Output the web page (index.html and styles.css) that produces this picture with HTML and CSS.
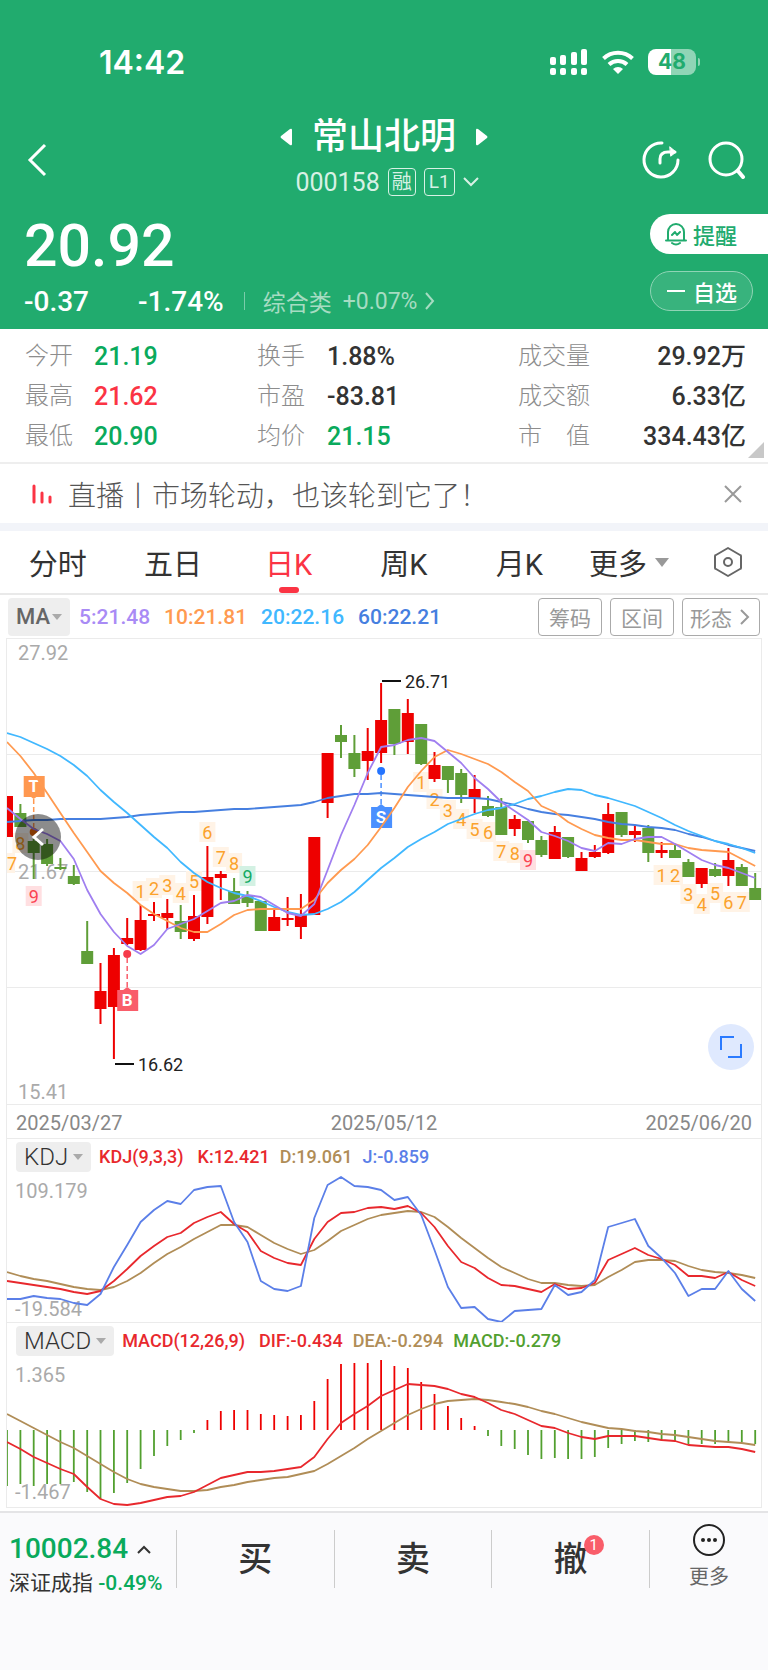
FILE: index.html
```html
<!DOCTYPE html>
<html lang="zh-CN">
<head>
<meta charset="UTF-8">
<meta name="viewport" content="width=device-width, initial-scale=1.0">
<title>常山北明 000158</title>
<link rel="stylesheet" href="styles.css">
</head>
<body>

<header class="header">
  <div class="status-bar">
    <span class="time">14:42</span>
    <div class="status-icons">
      <svg width="38" height="28" viewBox="0 0 38 28" fill="#fff">
        <rect x="0" y="9" width="6" height="8" rx="2"/>
        <rect x="10" y="7" width="6" height="10" rx="2"/>
        <rect x="21" y="4" width="6" height="13" rx="2"/>
        <rect x="31" y="1" width="6" height="16" rx="2"/>
        <rect x="0" y="20" width="6" height="7" rx="2"/>
        <rect x="10" y="20" width="6" height="7" rx="2"/>
        <rect x="21" y="20" width="6" height="7" rx="2"/>
        <rect x="31" y="20" width="6" height="7" rx="2"/>
      </svg>
      <svg width="34" height="26" viewBox="0 0 34 26" fill="none" stroke="#fff" stroke-width="4">
        <path d="M2.500 9.500a21 21 0 0 1 29 0"/>
        <path d="M8 15.500a13 13 0 0 1 18 0"/>
        <path d="M17 25l-5-5a7.500 7.500 0 0 1 10 0z" fill="#fff" stroke="none"/>
      </svg>
      <span class="battery">48</span>
    </div>
  </div>

  <div class="title-bar">
    <button class="icon-btn back" aria-label="返回">
      <svg width="20" height="34" viewBox="0 0 20 34" fill="none" stroke="#fff" stroke-width="3"><path d="M18 2L3 17l15 15"/></svg>
    </button>
    <div class="title">
      <div class="title-name">
        <button class="icon-btn" aria-label="上一只"><svg width="12" height="18" viewBox="0 0 12 18" fill="#fff"><path d="M12 2v14q0 2-2 1L1 10q-1-1 0-2l9-7q2-1 2 1z"/></svg></button>
        <h1>常山北明</h1>
        <button class="icon-btn" aria-label="下一只"><svg width="12" height="18" viewBox="0 0 12 18" fill="#fff"><path d="M0 2v14q0 2 2 1l9-7q1-1 0-2L2 1Q0 0 0 2z"/></svg></button>
      </div>
      <div class="title-code">
        <span class="code">000158</span>
        <span class="tag tag-cn">融</span>
        <span class="tag">L1</span>
        <svg width="16" height="10" viewBox="0 0 16 10" fill="none" stroke="#d8f1e5" stroke-width="2"><path d="M1 1l7 7 7-7"/></svg>
      </div>
    </div>
    <div class="title-actions">
      <button class="icon-btn" aria-label="分享">
        <svg width="38" height="38" viewBox="0 0 38 38" fill="none" stroke="#fff" stroke-width="3" stroke-linecap="round">
          <path d="M20 2a17 17 0 1 0 16 17"/>
          <path d="M18 22v-4q0-7 8-7h7"/>
          <path d="M28 6l6 5-5 4z" fill="#fff" stroke-width="1"/>
        </svg>
      </button>
      <button class="icon-btn" aria-label="搜索">
        <svg width="38" height="38" viewBox="0 0 38 38" fill="none" stroke="#fff" stroke-width="3" stroke-linecap="round"><circle cx="18" cy="18" r="16"/><path d="M30 30l5 6" stroke-width="4"/></svg>
      </button>
    </div>
  </div>

  <div class="quote">
    <div class="quote-main">
      <div class="price">20.92</div>
      <div class="change">
        <span class="change-value">-0.37</span>
        <span class="change-rate">-1.74%</span>
        <a class="sector" href="#"><span>综合类</span><span>+0.07%</span>
          <svg width="10" height="18" viewBox="0 0 10 18" fill="none" stroke="#a6dcc2" stroke-width="2"><path d="M1 1l7 8-7 8"/></svg>
        </a>
      </div>
    </div>
    <div class="quote-actions">
      <button class="pill pill-alert">
        <svg width="22" height="24" viewBox="0 0 22 24" fill="none" stroke="#21ab6e" stroke-width="2" stroke-linecap="round" stroke-linejoin="round"><path d="M3 18V10a8 8 0 0 1 16 0v8M1 18.500h20M7 21q4 3 8 0M7 13l3-3 2 3 3-3"/></svg>
        提醒
      </button>
      <button class="pill pill-watch">
        <svg width="18" height="4" viewBox="0 0 18 4" stroke="#fff" stroke-width="2"><path d="M0 2h18"/></svg>
        自选
      </button>
    </div>
  </div>
</header>

<section class="stats">
  <dl class="stats-col col-a">
    <dt>今开</dt><dd class="green">21.19</dd>
    <dt>最高</dt><dd class="red">21.62</dd>
    <dt>最低</dt><dd class="green">20.90</dd>
  </dl>
  <dl class="stats-col col-b">
    <dt>换手</dt><dd>1.88%</dd>
    <dt>市盈</dt><dd>-83.81</dd>
    <dt>均价</dt><dd class="green">21.15</dd>
  </dl>
  <dl class="stats-col col-c">
    <dt>成交量</dt><dd>29.92万</dd>
    <dt>成交额</dt><dd>6.33亿</dd>
    <dt>市　值</dt><dd>334.43亿</dd>
  </dl>
</section>

<section class="news">
  <svg class="news-icon" width="20" height="20" viewBox="0 0 20 20" stroke="#fb3444" stroke-width="3" stroke-linecap="round"><path d="M2 2v16M10 9v9M18 13v5"/></svg>
  <a href="#">直播丨市场轮动，也该轮到它了！</a>
  <button class="icon-btn" aria-label="关闭">
    <svg width="18" height="18" viewBox="0 0 18 18" stroke="#999" stroke-width="2"><path d="M1 1l16 16M17 1L1 17"/></svg>
  </button>
</section>

<nav class="tabs">
  <button>分时</button>
  <button>五日</button>
  <button class="active">日K</button>
  <button>周K</button>
  <button>月K</button>
  <button class="tab-more">更多<i class="caret"></i></button>
  <button class="tab-set" aria-label="设置">
    <svg width="28" height="32" viewBox="0 0 28 32" fill="none" stroke="#666" stroke-width="2" stroke-linejoin="round"><path d="M14 2l12 7q1 0 1 1v12q0 1-1 1l-12 7-12-7q-1 0-1-1V10q0-1 1-1z"/><circle cx="14" cy="16" r="4"/></svg>
  </button>
</nav>

<main>
  <div class="ma-bar">
    <button class="indicator indicator-ma">MA<i class="caret caret-sm"></i></button>
    <span class="ma5">5:21.48</span>
    <span class="ma10">10:21.81</span>
    <span class="ma20">20:22.16</span>
    <span class="ma60">60:22.21</span>
    <div class="ma-tools">
      <button>筹码</button>
      <button>区间</button>
      <button>形态<svg width="10" height="16" viewBox="0 0 10 16" fill="none" stroke="#999" stroke-width="2"><path d="M1 1l7 7-7 7"/></svg></button>
    </div>
  </div>

  <section class="chart">
    <svg id="kline" viewBox="0 0 754 465"></svg>
    <button class="chart-prev" aria-label="向左">
      <svg width="14" height="20" viewBox="0 0 14 20" fill="none" stroke="#fff" stroke-width="3"><path d="M12 2L3 10l9 8"/></svg>
    </button>
    <button class="chart-full" aria-label="全屏">
      <svg width="22" height="22" viewBox="0 0 22 22" fill="none" stroke="#2b7bff" stroke-width="2"><path d="M1 14V1h13M21 8v13H8"/></svg>
    </button>
  </section>

  <div class="dates"><span>2025/03/27</span><span>2025/05/12</span><span>2025/06/20</span></div>

  <section class="sub-chart">
    <div class="legend">
      <button class="indicator">KDJ<i class="caret caret-sm"></i></button>
      <span class="k legend-name">KDJ(9,3,3)</span>
      <span class="k">K:12.421</span>
      <span class="d">D:19.061</span>
      <span class="j">J:-0.859</span>
    </div>
    <svg id="kdj" viewBox="0 0 754 148"></svg>
  </section>

  <section class="sub-chart last">
    <div class="legend">
      <button class="indicator">MACD<i class="caret caret-sm"></i></button>
      <span class="k legend-name">MACD(12,26,9)</span>
      <span class="k">DIF:-0.434</span>
      <span class="d">DEA:-0.294</span>
      <span class="m">MACD:-0.279</span>
    </div>
    <svg id="macd" viewBox="0 0 754 149"></svg>
  </section>
</main>

<footer class="footer">
  <a class="index" href="#">
    <span class="index-value">10002.84
      <svg width="14" height="9" viewBox="0 0 14 9" fill="none" stroke="#333" stroke-width="2"><path d="M1 8l6-6 6 6"/></svg>
    </span>
    <span class="index-name">深证成指 <b>-0.49%</b></span>
  </a>
  <button class="trade">买</button>
  <button class="trade">卖</button>
  <button class="trade"><span class="trade-label">撤<span class="badge">1</span></span></button>
  <button class="more">
    <svg width="34" height="34" viewBox="0 0 34 34" fill="none" stroke="#222" stroke-width="2"><circle cx="17" cy="17" r="15"/><g fill="#222" stroke="none"><circle cx="11" cy="17" r="2"/><circle cx="17" cy="17" r="2"/><circle cx="23" cy="17" r="2"/></g></svg>
    更多
  </button>
</footer>

<script src="chart.js"></script>
</body>
</html>
```

FILE: styles.css
```css
* {
  box-sizing: border-box;
}

body {
  margin: 0;
  min-height: 100vh;
  display: flex;
  flex-direction: column;
  background: #fff;
  color: #333;
  font-family: Roboto, "Noto Sans CJK SC", sans-serif;
}

button {
  padding: 0;
  border: none;
  background: none;
  color: inherit;
  font: inherit;
  cursor: pointer;
}

a {
  color: inherit;
  text-decoration: none;
}

svg {
  display: block;
  flex: none;
}

.icon-btn {
  display: flex;
}

.green { color: #0aaa5c; }
.red { color: #fb3444; }

/* header */
.header {
  height: 329px;
  background: #21ab6e;
  color: #fff;
}

.status-bar {
  display: flex;
  justify-content: space-between;
  align-items: center;
  height: 115px;
  padding: 9px 72px 0 99px;
}

.time {
  font: 600 32px Inter, sans-serif;
}

.status-icons {
  display: flex;
  align-items: center;
  gap: 13px;
}

.battery {
  position: relative;
  width: 48px;
  height: 26px;
  border-radius: 8px;
  background: linear-gradient(90deg, #fff 48%, #90d5b6 48%);
  color: #21ab6e;
  font: 700 21px/26px Inter, sans-serif;
  text-align: center;
}

.battery::after {
  content: "";
  position: absolute;
  left: 50px;
  top: 9px;
  width: 2px;
  height: 8px;
  border-radius: 0 2px 2px 0;
  background: #90d5b6;
}

.title-bar {
  display: grid;
  grid-template-columns: 1fr auto 1fr;
  align-items: center;
  height: 90px;
  padding: 0 22px;
}

.back {
  margin-left: 5px;
}

.title {
  display: flex;
  flex-direction: column;
  align-items: center;
}

.title-name {
  display: flex;
  align-items: center;
  gap: 20px;
}

h1 {
  margin: 0;
  font-size: 36px;
  font-weight: 500;
  line-height: 44px;
}

.title-code {
  display: flex;
  align-items: center;
  gap: 8px;
  height: 46px;
  padding-left: 6px;
  color: #d8f1e5;
}

.code {
  font-size: 25px;
}

.tag {
  height: 28px;
  padding: 0 4px;
  border: 1px solid #d8f1e5;
  border-radius: 4px;
  font-size: 19px;
  line-height: 26px;
}

.tag-cn {
  padding: 0 3px;
  font-size: 20px;
}

.title-actions {
  display: flex;
  justify-content: flex-end;
  gap: 28px;
}

.quote {
  display: flex;
  justify-content: space-between;
  padding-left: 24px;
}

.price {
  padding-top: 9px;
  font-size: 59px;
  font-weight: 500;
  line-height: 64px;
}

.change {
  display: flex;
  align-items: center;
  height: 46px;
  font-size: 28px;
  font-weight: 500;
}

.change-rate {
  margin-left: 49px;
}

.sector {
  display: flex;
  align-items: center;
  gap: 11px;
  height: 18px;
  margin-left: 20px;
  padding-left: 18px;
  border-left: 1px solid #7accaa;
  color: #a6dcc2;
  font-size: 23px;
  font-weight: 400;
}

.sector svg {
  margin-left: -3px;
}

.quote-actions {
  display: flex;
  flex-direction: column;
  align-items: flex-end;
  gap: 17px;
  padding-top: 9px;
}

.pill {
  display: flex;
  align-items: center;
  gap: 6px;
  height: 40px;
  font-size: 22px;
  font-weight: 500;
}

.pill-alert {
  width: 118px;
  padding-left: 15px;
  border-radius: 20px 0 0 20px;
  background: #fff;
  color: #21ab6e;
}

.pill-watch {
  width: 103px;
  margin-right: 15px;
  padding-left: 16px;
  gap: 8px;
  border: 1px solid #8fd4b5;
  border-radius: 20px;
  background: #38b37d;
}

/* stats */
.stats {
  position: relative;
  display: grid;
  grid-template-columns: 232px 261px 1fr;
  height: 133px;
  padding: 7px 22px 0 25px;
}

.stats::after {
  content: "";
  position: absolute;
  right: 4px;
  bottom: 4px;
  border: 8px solid #c8c8c8;
  border-top-color: transparent;
  border-left-color: transparent;
}

.stats-col {
  display: grid;
  grid-template-rows: repeat(3, 40px);
  align-items: center;
  margin: 0;
  font-size: 24px;
  line-height: 40px;
}

.stats dt {
  color: #8d8d8d;
  font-weight: 300;
}

.stats dd {
  margin: 0;
  padding-top: 2px;
  font-size: 25px;
  font-weight: 500;
}

.col-a { grid-template-columns: 69px 1fr; }
.col-b { grid-template-columns: 70px 1fr; }
.col-c { grid-template-columns: 80px 1fr; }
.col-c dd { text-align: right; }

/* news */
.news {
  display: flex;
  align-items: center;
  height: 61px;
  padding: 0 26px 0 32px;
  border-top: 2px solid #eee;
  color: #555;
  font-size: 28px;
  font-weight: 300;
}

.news a {
  flex: 1;
  margin-left: 16px;
}

/* tabs */
.tabs {
  display: flex;
  height: 72px;
  padding-right: 26px;
  border-top: 8px solid #f2f4f9;
  border-bottom: 2px solid #e9e9e9;
  color: #333;
  font-size: 29px;
}

.tabs button {
  display: flex;
  flex: 1;
  align-items: center;
  justify-content: center;
}

.tabs .active {
  position: relative;
  color: #fb3444;
}

.tabs .tab-more {
  flex: 0 0 137px;
  justify-content: flex-start;
  padding-left: 12px;
}

.tabs .tab-set {
  flex: none;
}

.active::after {
  content: "";
  position: absolute;
  left: calc(50% - 10px);
  bottom: 0;
  width: 20px;
  height: 6px;
  border-radius: 3px;
  background: #fb3444;
}

.caret {
  margin-left: 8px;
  border: 7px solid transparent;
  border-top: 9px solid #999;
  border-bottom: none;
}

.caret-sm {
  margin-left: 5px;
  border-width: 6px 5px 0;
  border-top-color: #aaa;
}

/* MA row */
.ma-bar {
  display: flex;
  align-items: center;
  gap: 14px;
  height: 43px;
  padding: 0 8px;
  font-size: 21px;
  font-weight: 500;
}

.indicator {
  display: flex;
  align-items: center;
  padding: 0 8px;
  border-radius: 4px;
  background: #eee;
  font-size: 24px;
  font-weight: 300;
}

.indicator-ma {
  height: 38px;
  margin-right: -5px;
  color: #666;
  font-size: 22px;
  font-weight: 500;
}

.indicator-ma .caret {
  margin-left: 2px;
}

.ma5 { color: #a98bf5; }
.ma10 { color: #ff9a50; }
.ma20 { color: #41b8ff; }
.ma60 { color: #467fe0; }

.ma-tools {
  display: flex;
  gap: 8px;
  margin-left: auto;
}

.ma-tools button {
  display: flex;
  align-items: center;
  gap: 8px;
  height: 38px;
  padding: 0 10px;
  border: 1px solid #aaa;
  border-radius: 4px;
  color: #999;
  font-size: 21px;
  font-weight: 400;
}

.ma-tools button:last-child {
  padding: 0 9px 0 7px;
}

/* charts */
.chart,
.dates,
.sub-chart {
  position: relative;
  margin: 0 6px;
  border: 1px solid #ebebeb;
  border-bottom: none;
}

.chart > svg,
.sub-chart > svg {
  width: 100%;
  height: auto;
}

.chart text,
.sub-chart text {
  font-size: 20px;
}

.axis { fill: #aaa; }
.grid { stroke: #ebebeb; }

.chart .extreme,
.chart .signal {
  font-size: 18px;
}

.chart .signal,
.chart .trade-mark {
  text-anchor: middle;
}

.chart .trade-mark {
  fill: #fff;
  font-size: 17px;
  font-weight: 700;
}

.chart-prev,
.chart-full {
  position: absolute;
  display: flex;
  align-items: center;
  justify-content: center;
  width: 46px;
  height: 46px;
  border-radius: 50%;
}

.chart-prev {
  left: 8px;
  top: 175px;
  background: rgba(0, 0, 0, 0.45);
}

.chart-full {
  right: 7px;
  bottom: 34px;
  background: #dfe9fe;
}

.dates {
  display: flex;
  justify-content: space-between;
  height: 34px;
  padding: 0 9px;
  color: #888;
  font-size: 20px;
  line-height: 36px;
}

.legend {
  display: flex;
  align-items: center;
  gap: 10px;
  height: 35px;
  padding: 0 9px;
  font-size: 18px;
  font-weight: 500;
}

.legend .indicator {
  height: 30px;
  margin-right: -2px;
}

.legend-name {
  margin-right: 4px;
}

.k { color: #e8282d; }
.d { color: #b08d57; }
.j { color: #5b7fe8; }
.m { color: #52a02f; }

.last {
  border-bottom: 1px solid #ebebeb;
}

/* footer */
.footer {
  display: flex;
  flex: 1;
  align-items: flex-start;
  margin-top: 3px;
  padding-top: 17px;
  border-top: 2px solid #e4e4e6;
  background: #fafafc;
}

.index {
  display: flex;
  flex-direction: column;
  width: 176px;
  padding-left: 9px;
}

.index-value {
  display: flex;
  align-items: center;
  gap: 9px;
  color: #0aaa5c;
  font-size: 28px;
  font-weight: 500;
  line-height: 38px;
}

.index-name {
  font-size: 21px;
  line-height: 30px;
  white-space: nowrap;
}

.index-name b {
  color: #0aaa5c;
  font-weight: 500;
}

.trade {
  flex: 1;
  height: 58px;
  border-left: 1px solid #ccc;
  font-size: 34px;
  font-weight: 500;
  line-height: 54px;
}

.trade-label {
  position: relative;
}

.badge {
  position: absolute;
  right: -16px;
  top: -4px;
  width: 20px;
  height: 20px;
  border-radius: 50%;
  background: #f95d6a;
  color: #fff;
  font-size: 15px;
  font-weight: 400;
  line-height: 20px;
  text-align: center;
}

.more {
  display: flex;
  flex-direction: column;
  align-items: center;
  gap: 5px;
  width: 119px;
  height: 58px;
  border-left: 1px solid #ccc;
  color: #666;
  font-size: 20px;
  line-height: 30px;
}

.more svg {
  margin-top: -7px;
}
```

FILE: chart.js
```js
var STEP = 13.36;
var RED = "#ee0000";
var GREEN = "#5f9e38";

function x(i) {
  return Math.round(i * STEP * 10) / 10;
}

function line(values, color) {
  var points = values.map(function(y, i) { return x(i) + "," + y; }).join(" ");
  return '<polyline points="' + points + '" fill="none" stroke="' + color + '" stroke-width="1.8" stroke-linejoin="round"/>';
}

function text(cls, tx, ty, value, fill) {
  return '<text class="' + cls + '" x="' + tx + '" y="' + ty + '"' + (fill ? ' fill="' + fill + '"' : '') + '>' + value + '</text>';
}

// up (1) or down (0), high, body top, body bottom, low
var candles = [
  [1,157,157,198,198],[0,165,174,188,188],[0,200,202,214,240],[0,200,205,225,227],[0,219,228,230,231],
  [0,226,237,245,246],[0,282,312,325,325],[1,324,352,370,385],[1,309,316,368,420],[1,279,299,305,306],
  [1,266,281,311,312],[1,263,275,277,282],[1,260,274,279,290],[0,266,282,293,300],[1,256,277,300,302],
  [1,207,238,278,285],[1,232,235,239,261],[0,239,252,265,265],[0,252,257,264,268],[0,262,262,292,292],
  [1,270,278,292,292],[1,258,279,281,287],[1,255,275,288,300],[1,198,198,276,276],[1,114,114,164,179],
  [0,86,96,103,119],[0,96,114,130,138],[1,89,112,122,141],[1,44,81,114,124],[0,70,70,105,116],
  [1,60,74,103,115],[0,85,85,125,126],[1,113,126,140,143],[0,127,127,141,154],[0,130,134,156,164],
  [1,136,150,159,174],[0,157,167,177,178],[0,159,168,196,196],[1,176,180,190,197],[0,182,182,201,204],
  [0,197,201,216,218],[1,187,193,220,220],[0,198,198,218,219],[1,213,219,232,232],[1,206,213,218,219],
  [1,164,175,214,215],[0,173,173,196,198],[1,186,192,196,203],[0,186,189,214,223],[1,203,211,214,219],
  [0,206,211,219,219],[0,220,223,238,238],[1,229,229,245,249],[0,224,230,237,238],[1,209,221,237,247],
  [0,225,228,247,247],[0,234,249,261,261]
];

var ma5 = [169,180,190,195,202,220,251,275,293,307,315,306,290,285,280,272,264,262,256,258,266,274,277,265,231,196,166,134,108,106,101,99,102,113,124,139,150,163,172,181,193,197,202,209,212,204,205,200,198,198,205,213,221,226,229,234,239];
var ma10 = [103,117,134,154,174,194,213,232,244,254,266,275,282,289,293,293,285,276,271,270,270,270,270,261,244,231,220,206,188,169,148,132,118,111,115,120,125,133,143,152,167,173,183,190,196,199,201,201,203,205,205,209,211,212,213,220,227];
var ma20 = [94,98,104,110,117,126,137,151,163,174,186,198,209,223,234,243,249,254,257,262,268,273,276,275,270,263,253,241,229,219,208,200,193,185,180,175,171,169,165,160,157,153,150,151,156,159,163,167,173,179,186,192,197,202,205,209,214];
var ma60 = [183,182,181,181,180,180,180,180,179,178,176,175,174,173,173,172,171,170,170,169,168,167,166,163,159,157,155,155,154,155,156,157,158,159,159,159,160,163,166,170,173,175,176,178,180,183,185,186,188,189,191,195,198,202,206,209,212];

// candle index, y centre, count
var signals = [
  [0,224,7],[1,204,8],[2,257,9,"red"],[10,252,1],[11,249,2],[12,246,3],[13,254,4],[14,242,5],[15,193,6],
  [16,218,7],[17,224,8],[18,237,9,"green"],[31,143,1],[32,160,2],[33,171,3],[34,180,4],[35,190,5],[36,193,6],
  [37,212,7],[38,214,8],[39,221,9,"red"],[49,236,1],[50,236,2],[51,255,3],[52,265,4],[53,254,5],[54,263,6],[55,263,7]
];
var signalColors = {
  orange: ["#fff3e6", "#fba22c"],
  red: ["#ffdfe1", "#fb4352"],
  green: ["#d3f1e3", "#14ab66"]
};

function mark(i, y, letter, color, dotY, dotColor) {
  var cx = x(i);
  var below = y > dotY;
  var edge = below ? y - 10 : y + 10;
  var tip = below ? edge - 3 : edge + 3;
  return '<path d="M' + cx + ' ' + tip + 'V' + dotY + '" stroke="' + color + '" stroke-width="1.5" stroke-dasharray="5 3"/>' +
    '<rect x="' + (cx - 10) + '" y="' + (y - 10) + '" width="21" height="21" fill="' + color + '"/>' +
    '<path d="M' + (cx - 4) + ' ' + edge + 'L' + cx + ' ' + tip + 'L' + (cx + 4) + ' ' + edge + 'z" fill="' + color + '"/>' +
    '<circle cx="' + cx + '" cy="' + dotY + '" r="4" fill="' + dotColor + '"/>' +
    text("trade-mark", cx, y + 6, letter);
}

function drawKline() {
  var out = '<path class="grid" d="M0 115.500H754M0 232.500H754M0 348.500H754"/>';
  signals.forEach(function(s) {
    var c = signalColors[s[3] || "orange"];
    out += '<rect x="' + (x(s[0]) - 8) + '" y="' + (s[1] - 10) + '" width="16" height="20" fill="' + c[0] + '"/>';
  });
  out += text("axis", 11, 21, "27.92") + text("axis", 11, 240, "21.67") + text("axis", 11, 460, "15.41");
  candles.forEach(function(c, i) {
    var color = c[0] ? RED : GREEN;
    out += '<path d="M' + x(i) + ' ' + c[1] + 'V' + c[4] + '" stroke="' + color + '" stroke-width="2"/>' +
      '<rect x="' + (x(i) - 6) + '" y="' + c[2] + '" width="12" height="' + (c[3] - c[2]) + '" fill="' + color + '"/>';
  });
  signals.forEach(function(s) {
    // the first count stays inside the left border
    out += text("signal", Math.max(x(s[0]), 5), s[1] + 7, s[2], signalColors[s[3] || "orange"][1]);
  });
  out += mark(2, 147, "T", "#ff9850", 193, "#f26a0a");
  out += mark(28, 178, "S", "#4a90ff", 132, "#2474ff");
  out += mark(9, 361, "B", "#f95d6a", 315, "#f63a4a");
  out += line(ma60, "#467fe0") + line(ma20, "#41b8ff") + line(ma10, "#ff9a50") + line(ma5, "#a07ff0");
  out += '<path d="M375 42h19M108 425h19" stroke="#111" stroke-width="2"/>';
  out += text("extreme", 398, 49, "26.71", "#222") + text("extreme", 131, 432, "16.62", "#222");
  document.getElementById("kline").innerHTML = out;
}

var kdjK = [107,109,111,113,115,118,120,117,107,95,82,72,63,59,49,43,38,50,58,77,84,89,91,65,48,39,38,34,33,35,32,39,53,72,88,94,104,111,112,115,118,110,115,114,109,86,80,74,81,85,91,102,102,104,98,106,112];
var kdjD = [98,102,105,107,110,113,115,116,113,107,99,89,80,73,65,58,51,51,53,61,69,75,80,76,67,57,51,45,41,39,37,38,43,53,64,74,84,93,99,105,109,109,111,112,111,103,96,88,86,86,87,92,96,98,99,101,104];
var kdjJ = [125,125,122,124,125,129,131,120,93,71,48,36,27,30,16,13,12,48,68,107,115,117,112,44,11,3,12,13,16,26,23,41,76,113,134,133,145,148,137,136,135,111,121,118,106,53,49,45,72,84,99,122,115,115,97,115,127];

function drawKdj() {
  document.getElementById("kdj").innerHTML =
    text("axis", 8, 24, "109.179") + text("axis", 8, 142, "-19.584") +
    line(kdjD, "#b08d57") + line(kdjK, "#e8282d") + line(kdjJ, "#5b7fe8");
}

var ZERO = 72;
var bars = [128,126,128,126,126,124,134,141,135,125,111,98,88,82,75,62,53,52,52,56,57,58,57,43,21,6,5,5,2,8,10,24,36,48,60,68,78,88,91,97,101,100,101,101,99,90,86,83,84,83,84,86,86,86,83,84,86];
var dif = [84,91,99,105,111,116,129,141,146,147,145,142,139,138,134,127,120,117,114,114,113,111,109,99,81,65,56,48,38,32,26,27,28,31,36,39,45,52,56,62,68,70,75,79,81,78,78,78,80,82,83,87,88,89,89,91,94];
var dea = [56,63,70,77,84,90,98,106,114,121,126,129,131,133,133,132,129,127,124,122,120,119,116,113,106,98,90,81,73,65,57,51,46,43,42,41,42,44,46,49,53,56,60,64,67,70,71,73,74,76,77,79,81,83,84,85,87];

function drawMacd() {
  var out = text("axis", 8, 24, "1.365") + text("axis", 8, 141, "-1.467");
  bars.forEach(function(y, i) {
    var color = y < ZERO ? RED : "#52a02f";
    out += '<path d="M' + x(i) + ' ' + ZERO + 'V' + y + '" stroke="' + color + '" stroke-width="1.8"/>';
  });
  out += line(dea, "#b08d57") + line(dif, "#e8282d");
  document.getElementById("macd").innerHTML = out;
}

drawKline();
drawKdj();
drawMacd();
```
